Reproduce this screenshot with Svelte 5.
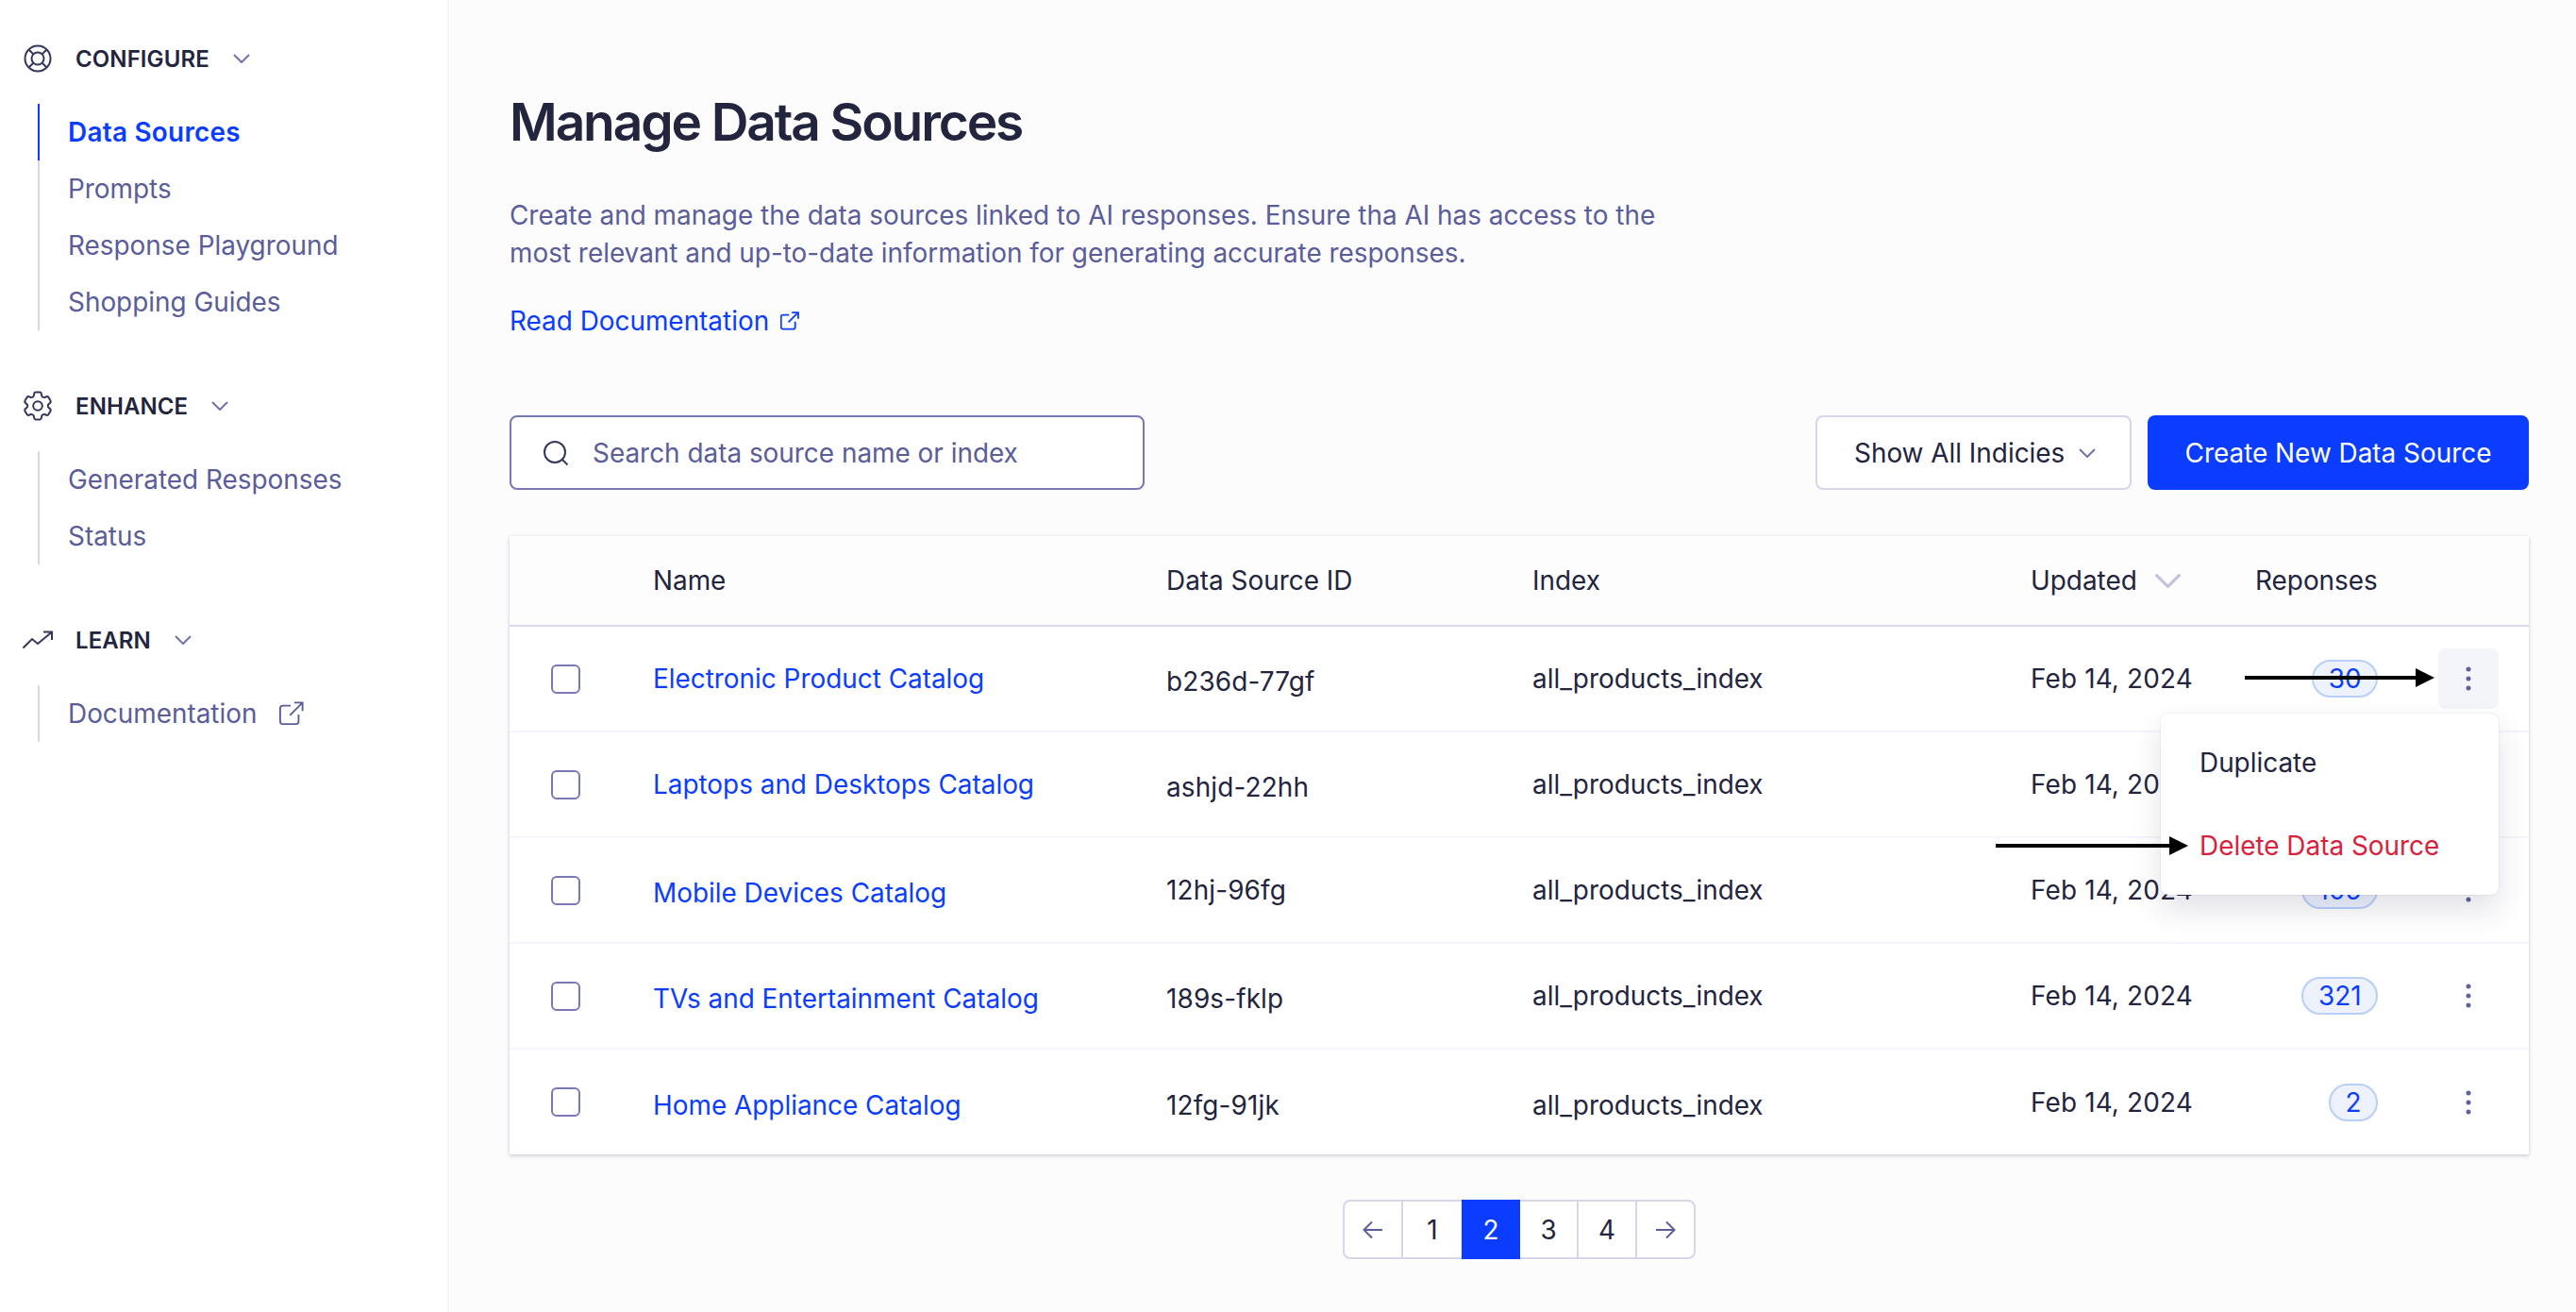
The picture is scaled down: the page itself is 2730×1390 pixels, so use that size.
<script lang="ts">
  const sections = [
    { title: 'CONFIGURE', icon: 'help', items: ['Data Sources', 'Prompts', 'Response Playground', 'Shopping Guides'] },
    { title: 'ENHANCE', icon: 'gear', items: ['Generated Responses', 'Status'] },
    { title: 'LEARN', icon: 'trend', items: ['Documentation'] }
  ];

  // dy: the reference cells do not all share one baseline
  const rows = [
    { name: 'Electronic Product Catalog', id: 'b236d-77gf', count: 30, nameDy: 0, idDy: 3, indexDy: 0 },
    { name: 'Laptops and Desktops Catalog', id: 'ashjd-22hh', count: 12, nameDy: 0, idDy: 3, indexDy: 0 },
    { name: 'Mobile Devices Catalog', id: '12hj-96fg', count: 105, nameDy: 3, idDy: 0, indexDy: 0 },
    { name: 'TVs and Entertainment Catalog', id: '189s-fklp', count: 321, nameDy: 3, idDy: 3, indexDy: 0 },
    { name: 'Home Appliance Catalog', id: '12fg-91jk', count: 2, nameDy: 3, idDy: 3, indexDy: 3 }
  ];

  const pages = [1, 2, 3, 4];
  const currentPage = 2;
</script>

{#snippet chevron(cls)}
  <svg class={cls} viewBox="0 0 18 10" fill="none"><path d="M1 1l8 8 8-8" /></svg>
{/snippet}

{#snippet external(cls)}
  <svg class={cls} viewBox="0 0 28 28" fill="none">
    <path d="M13 5H4a3 3 0 0 0-3 3v15a3 3 0 0 0 3 3h15a3 3 0 0 0 3-3v-8" />
    <path d="M12 16L26 2M17 1.500h9.500V11" />
  </svg>
{/snippet}

{#snippet kebab()}
  <svg class="dots" viewBox="0 0 6 26"><circle cx="3" cy="3" r="2.500" /><circle cx="3" cy="13" r="2.500" /><circle cx="3" cy="23" r="2.500" /></svg>
{/snippet}

<div class="page">
  <aside class="sidebar">
    {#each sections as section}
      <section class="group">
        <header class="group-head">
          {#if section.icon === 'help'}
            <svg class="group-icon" viewBox="0 0 32 32" fill="none">
              <circle cx="16" cy="16" r="13.500" />
              <circle cx="16" cy="16" r="6.500" />
              <path d="M6.500 6.500l5 5M25.500 6.500l-5 5M6.500 25.500l5-5M25.500 25.500l-5-5" />
            </svg>
          {:else if section.icon === 'gear'}
            <svg class="group-icon" viewBox="2 2 20 20" fill="none" style="stroke-width:1.250">
              <path d="M9.594 3.94c.09-.542.56-.94 1.11-.94h2.593c.55 0 1.02.398 1.11.94l.213 1.281c.063.374.313.686.645.87.074.04.147.083.22.127.325.196.72.257 1.075.124l1.217-.456a1.125 1.125 0 0 1 1.37.49l1.296 2.247a1.125 1.125 0 0 1-.26 1.431l-1.003.827c-.293.241-.438.613-.43.992a7.723 7.723 0 0 1 0 .255c-.008.378.137.75.43.991l1.004.827c.424.35.534.955.26 1.43l-1.298 2.247a1.125 1.125 0 0 1-1.369.491l-1.217-.456c-.355-.133-.75-.072-1.076.124a6.47 6.47 0 0 1-.22.128c-.331.183-.581.495-.644.869l-.213 1.281c-.09.543-.56.94-1.11.94h-2.594c-.55 0-1.019-.398-1.11-.94l-.213-1.281c-.062-.374-.312-.686-.644-.87a6.52 6.52 0 0 1-.22-.127c-.325-.196-.72-.257-1.076-.124l-1.217.456a1.125 1.125 0 0 1-1.369-.49l-1.297-2.247a1.125 1.125 0 0 1 .26-1.431l1.004-.827c.292-.24.437-.613.43-.991a6.932 6.932 0 0 1 0-.255c.007-.38-.138-.751-.43-.992l-1.004-.827a1.125 1.125 0 0 1-.26-1.43l1.297-2.247a1.125 1.125 0 0 1 1.37-.491l1.216.456c.356.133.751.072 1.076-.124.072-.044.146-.086.22-.128.332-.183.582-.495.644-.869l.214-1.28Z" />
              <circle cx="12" cy="12" r="3" />
            </svg>
          {:else}
            <svg class="group-icon" viewBox="0 0 32 20" fill="none" style="height:20px">
              <path d="M0.500 18.500L10 9l6 5L30.500 2M22 1.500h9V10" />
            </svg>
          {/if}
          <span class="group-title">{section.title}</span>
          {@render chevron('chev')}
        </header>
        <nav class="links">
          {#each section.items as item, i}
            <div class="link" class:active={item === 'Data Sources'}>
              {item}
              {#if item === 'Documentation'}
                {@render external('ext big')}
              {/if}
            </div>
          {/each}
        </nav>
      </section>
    {/each}
  </aside>

  <main class="main">
    <h1>Manage Data Sources</h1>
    <p class="lead">
      Create and manage the data sources linked to AI responses. Ensure tha AI has access to the<br />
      most relevant and up-to-date information for generating accurate responses.
    </p>
    <div class="read">Read Documentation {@render external('ext small')}</div>

    <div class="toolbar">
      <div class="search">
        <svg class="search-icon" viewBox="0 0 28 28" fill="none">
          <circle cx="13" cy="13" r="11" /><path d="M21 21l5.500 5.500" />
        </svg>
        <span>Search data source name or index</span>
      </div>
      <div class="filter">Show All Indicies {@render chevron('chev small')}</div>
      <div class="create">Create New Data Source</div>
    </div>

    <div class="table">
      <div class="row head">
        <span></span>
        <span>Name</span>
        <span>Data Source ID</span>
        <span>Index</span>
        <span class="updated">Updated {@render chevron('chev sort')}</span>
        <span>Reponses</span>
        <span></span>
      </div>
      {#each rows as row, i}
        <div class="row">
          <span class="box"></span>
          <span class="name" style={`padding-top:${row.nameDy * 2}px`}>{row.name}</span>
          <span class="nums" style={`padding-top:${row.idDy * 2}px`}>{row.id}</span>
          <span style={`padding-top:${row.indexDy * 2}px`}>all_products_index</span>
          <span class="nums">Feb 14, 2024</span>
          <span class="count"><b class="chip">{row.count}</b></span>
          <span class="more" class:hover={i === 0}>{@render kebab()}</span>
        </div>
      {/each}

      <div class="menu">
        <div class="menu-item">Duplicate</div>
        <div class="menu-item danger">Delete Data Source</div>
      </div>

      <svg class="arrow one" viewBox="0 0 201 24"><path d="M0 10h181v-8l20 10-20 10v-8H0z" /></svg>
      <svg class="arrow two" viewBox="0 0 204 24"><path d="M0 10h184v-8l20 10-20 10v-8H0z" /></svg>
    </div>

    <div class="pager">
      <span class="page-btn">
        <svg class="pg-arrow" viewBox="0 0 22 20" fill="none"><path d="M21 10H2M10 1.500L1.500 10l8.500 8.500" /></svg>
      </span>
      {#each pages as p}
        <span class="page-btn" class:current={p === currentPage}>{p}</span>
      {/each}
      <span class="page-btn">
        <svg class="pg-arrow" viewBox="0 0 22 20" fill="none"><path d="M1 10h19M12 1.500l8.500 8.500-8.500 8.500" /></svg>
      </span>
    </div>
  </main>
</div>

<style>
  :global(body) {
    margin: 0;
    font-family: Inter, 'Liberation Sans', sans-serif;
    font-size: 27.900px;
    color: #23243d;
    background: #fcfcfd;
  }
  .page {
    display: flex;
    width: 2730px;
    height: 1390px;
    overflow: hidden;
  }

  .sidebar {
    width: 474px;
    flex: none;
    border-right: 2px solid #f5f5fa;
    background: #fff;
    padding-top: 36px;
  }
  .group {
    margin-bottom: 54px;
  }
  .group-head {
    display: flex;
    align-items: center;
    height: 52px;
    padding-left: 24px;
    margin-bottom: 22px;
  }
  .group-icon {
    width: 32px;
    height: 32px;
    flex: none;
    stroke: #35375a;
    stroke-width: 2;
  }
  .group-title {
    margin-left: 24px;
    font-size: 24px;
    font-weight: 600;
    letter-spacing: 0.1px;
  }
  .chev {
    fill: none;
  }
  .chev path {
    stroke: #6f72ab;
    stroke-width: 2;
  }
  .group-head .chev {
    width: 18px;
    height: 10px;
    margin-left: 25px;
  }
  .links {
    margin-left: 40px;
    border-left: 2px solid #d6d6ea;
  }
  .link {
    display: flex;
    align-items: center;
    height: 60px;
    padding-left: 30px;
    color: #5a5d99;
    margin-left: -2px;
    border-left: 2px solid transparent;
  }
  .link.active {
    color: #0a3dff;
    font-weight: 600;
    letter-spacing: 0.25px;
    border-left-color: #0a3dff;
  }
  .ext {
    fill: none;
  }
  .ext path {
    stroke: #5a5d99;
    stroke-width: 2;
  }
  .ext.big {
    width: 26px;
    height: 26px;
    margin-left: 24px;
  }
  .ext.small {
    width: 20px;
    height: 20px;
    margin-left: 4px;
  }
  .ext.small path {
    stroke-width: 2.600;
  }

  .main {
    flex: 1;
    min-width: 0;
    padding: 97px 50px 0 64px;
  }
  h1 {
    margin: 0 0 47px;
    font-size: 55px;
    line-height: 64px;
    font-weight: 600;
    letter-spacing: -2.100px;
  }
  .lead {
    margin: 0 0 32px;
    line-height: 40px;
    color: #5a5d99;
  }
  .read {
    display: flex;
    align-items: center;
    line-height: 40px;
    color: #0a3dff;
    gap: 8px;
    margin-bottom: 80px;
  }
  .read .ext path {
    stroke: #0a3dff;
  }

  .toolbar {
    display: flex;
    height: 79px;
    margin-bottom: 49px;
  }
  .search {
    display: flex;
    align-items: center;
    width: 673px;
    box-sizing: border-box;
    border: 2px solid #7679b3;
    border-radius: 8px;
    padding-left: 33px;
    color: #5a5d99;
    background: #fff;
  }
  .search-icon {
    width: 28px;
    height: 28px;
    margin-right: 25px;
    stroke: #35375a;
    stroke-width: 2;
  }
  .filter {
    display: flex;
    align-items: center;
    margin-left: auto;
    width: 335px;
    box-sizing: border-box;
    border: 2px solid #d6d6ea;
    border-radius: 8px;
    padding-left: 39px;
    background: #fff;
  }
  .chev.small {
    width: 18px;
    height: 10px;
    margin-left: 15px;
  }
  .create {
    display: flex;
    align-items: center;
    justify-content: center;
    width: 404px;
    margin-left: 17px;
    border-radius: 8px;
    background: #0a3dff;
    color: #fff;
  }

  .table {
    position: relative;
    background: #fff;
    box-shadow: 0 2px 4px rgba(70, 70, 130, 0.22), 0 0 3px rgba(70, 70, 130, 0.1);
  }
  .row {
    display: grid;
    grid-template-columns: 152px 544px 388px 528px 238px 130px 160px;
    align-items: center;
    height: 112px;
    box-sizing: border-box;
    border-bottom: 2px solid #f4f4fb;
  }
  .row:nth-last-child(4) {
    border-bottom: 0;
    height: 111px;
  }
  .row.head {
    height: 96px;
    background: #fdfdfe;
    border-bottom-color: #d9d9ec;
  }
  .nums {
    letter-spacing: 0.15px;
  }
  .updated {
    display: flex;
    align-items: center;
  }
  .chev.sort {
    width: 29px;
    height: 16px;
    margin-left: 18px;
  }
  .chev.sort path {
    stroke: #c3c3de;
    stroke-width: 2;
  }
  .box {
    width: 31px;
    height: 31px;
    box-sizing: border-box;
    margin-left: 44px;
    border: 2px solid #7679b3;
    border-radius: 6px;
  }
  .name {
    color: #0a3dff;
  }
  .count {
    display: flex;
    justify-content: flex-end;
  }
  .chip {
    height: 40px;
    box-sizing: border-box;
    padding: 0 15.500px;
    border: 2px solid #b8cffa;
    border-radius: 20px;
    background: #edf2fe;
    color: #0a3dff;
    font-weight: 400;
    line-height: 36px;
  }
  .more {
    display: flex;
    align-items: center;
    justify-content: center;
    width: 64px;
    height: 64px;
    margin-left: 64px;
    border-radius: 8px;
  }
  .more.hover {
    background: #f4f4fb;
  }
  .dots {
    width: 6px;
    height: 26px;
    fill: #5f6199;
  }

  .menu {
    position: absolute;
    left: 1750px;
    top: 188px;
    width: 358px;
    box-sizing: border-box;
    padding: 8px 0;
    border-radius: 8px;
    background: #fff;
    box-shadow: 0 0 2px rgba(70, 70, 130, 0.2), 0 16px 32px rgba(50, 50, 90, 0.14);
  }
  .menu-item {
    display: flex;
    align-items: center;
    height: 88px;
    padding-left: 41px;
  }
  .menu-item.danger {
    color: #d9213c;
  }
  .arrow {
    position: absolute;
    height: 24px;
    fill: #000;
  }
  .arrow.one {
    left: 1839px;
    top: 138px;
    width: 201px;
  }
  .arrow.two {
    left: 1575px;
    top: 316px;
    width: 204px;
  }

  .pager {
    display: flex;
    width: fit-content;
    margin: 48px auto 0;
    border: 2px solid #d6d6ea;
    border-radius: 8px;
    background: #fff;
  }
  .page-btn {
    display: flex;
    align-items: center;
    justify-content: center;
    height: 59px;
    border-left: 2px solid #d6d6ea;
    width: 60px;
  }
  .page-btn:first-child {
    border-left: 0;
    border-radius: 6px 0 0 6px;
  }
  .page-btn:nth-child(2) {
    width: 62px;
  }
  .page-btn.current {
    background: #0a3dff;
    color: #fff;
    margin: -2px 0;
    height: 63px;
    border-left: 0;
    width: 62px;
  }
  .page-btn.current + .page-btn {
    border-left: 0;
  }
  .pg-arrow {
    width: 22px;
    height: 20px;
    stroke: #5a5d99;
    stroke-width: 2;
  }
</style>
